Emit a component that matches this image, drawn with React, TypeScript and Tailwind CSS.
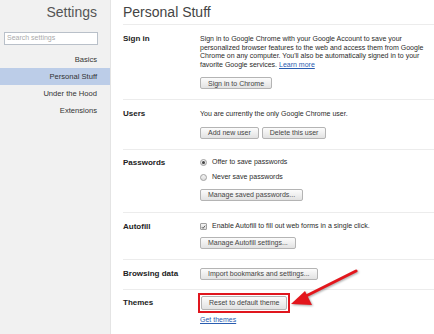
import React from 'react'

const font = { fontFamily: '"Liberation Sans", Arial, sans-serif' }

function Btn({ children, className = '' }: { children: React.ReactNode; className?: string }) {
  return (
    <div
      className={`inline-flex h-[12px] items-center whitespace-nowrap rounded-[2px] border border-[#b4b4b4] bg-linear-to-b from-[#fcfcfc] to-[#e2e2e2] px-[7px] text-[7px] leading-none text-[#444] ${className}`}
    >
      {children}
    </div>
  )
}

function Radio({ checked }: { checked?: boolean }) {
  return (
    <span className="flex h-[7px] w-[7px] items-center justify-center rounded-full border border-[#a0a0a0] bg-linear-to-b from-[#f4f4f4] to-[#dcdcdc]">
      {checked && <span className="h-[3px] w-[3px] rounded-full bg-[#444]" />}
    </span>
  )
}

function Section({ label, labelLead, children, className = '' }: { label: string; labelLead: string; children: React.ReactNode; className?: string }) {
  return (
    <div className={`flex border-t border-[#ececec] ${className}`}>
      <div className={`w-[77px] shrink-0 text-[8px] font-bold text-[#222] ${labelLead}`}>{label}</div>
      <div className="flex flex-col items-start">{children}</div>
    </div>
  )
}

export default function App() {
  const nav = ['Basics', 'Personal Stuff', 'Under the Hood', 'Extensions']

  return (
    <div className="relative flex h-[334px] w-[434px] overflow-hidden bg-white" style={font}>
      {/* sidebar */}
      <div className="w-[111px] shrink-0 border-r border-[#e4e4e4] bg-[#f1f1f1]">
        <div className="h-[24px] pr-[13px] pt-[3px] text-right text-[14px] leading-[18px] text-[#555]">Settings</div>
        <div className="mt-[8px] ml-[4px] mr-[12px] flex h-[13px] items-center border border-[#b9c0c9] bg-white px-[2px] text-[7px] text-[#aaa]">
          Search settings
        </div>
        <div className="mt-[6px]">
          {nav.map((n) => (
            <div
              key={n}
              className={`flex h-[17px] items-center justify-end pr-[13px] text-[7.6px] text-[#333] ${n === 'Personal Stuff' ? 'bg-[#bccde8]' : ''}`}
            >
              {n}
            </div>
          ))}
        </div>
      </div>

      {/* main */}
      <div className="flex-1 pl-[12px] text-[7px] text-[#2a2a2a]">
        <div className="h-[24px] pt-[3px] text-[14px] leading-[18px] text-[#444]">Personal Stuff</div>

        <Section label="Sign in" labelLead="leading-[8.5px]" className="pt-[10px] pb-[10px]">
          <p className="w-[228px] leading-[8.5px]">
            Sign in to Google Chrome with your Google Account to save your personalized browser features to the web and access them from Google
            Chrome on any computer. You'll also be automatically signed in to your favorite Google services.{' '}
            <span className="text-[#2a5db0] underline">Learn more</span>
          </p>
          <Btn className="mt-[8px]">Sign in to Chrome</Btn>
        </Section>

        <Section label="Users" labelLead="leading-[8.5px]" className="pt-[10px] pb-[10px]">
          <div className="leading-[8.5px]">You are currently the only Google Chrome user.</div>
          <div className="mt-[8px] flex gap-[3px]">
            <Btn>Add new user</Btn>
            <Btn>Delete this user</Btn>
          </div>
        </Section>

        <Section label="Passwords" labelLead="leading-[10px]" className="pt-[8px] pb-[11px]">
          <div className="flex h-[10px] items-center gap-[5px]">
            <Radio checked />
            <span>Offer to save passwords</span>
          </div>
          <div className="mt-[5px] flex h-[10px] items-center gap-[5px]">
            <Radio />
            <span>Never save passwords</span>
          </div>
          <Btn className="mt-[6px]">Manage saved passwords...</Btn>
        </Section>

        <Section label="Autofill" labelLead="leading-[10px]" className="pt-[9px] pb-[10px]">
          <div className="flex h-[10px] items-center gap-[5px]">
            <span className="flex h-[7px] w-[7px] items-center justify-center rounded-[1px] border border-[#a0a0a0] bg-linear-to-b from-[#f4f4f4] to-[#dcdcdc]">
              <svg width="6" height="6" viewBox="0 0 6 6">
                <path d="M1 3.2 L2.4 4.6 L5 1.4" fill="none" stroke="#444" strokeWidth="1" />
              </svg>
            </span>
            <span>Enable Autofill to fill out web forms in a single click.</span>
          </div>
          <Btn className="mt-[5px]">Manage Autofill settings...</Btn>
        </Section>

        <Section label="Browsing data" labelLead="leading-[12px]" className="pt-[8px] pb-[9px]">
          <Btn>Import bookmarks and settings...</Btn>
        </Section>

        <Section label="Themes" labelLead="leading-[20px]" className="pt-[3px]">
          <div className="-ml-[2px] border-2 border-[#e0161e] p-[1px]">
            <Btn className="h-[14px]">Reset to default theme</Btn>
          </div>
          <div className="mt-[3px] leading-[8.5px] text-[#2a5db0] underline">Get themes</div>
        </Section>
      </div>

      {/* annotation arrow */}
      <svg className="absolute left-0 top-0" width="434" height="334" style={{ filter: 'drop-shadow(1px 1px 1px rgba(0,0,0,0.35))' }}>
        <line x1="356" y1="271" x2="302" y2="298" stroke="#e3161c" strokeWidth="3" strokeLinecap="round" />
        <polygon points="291,304 305,291 312,305" fill="#e3161c" />
      </svg>
    </div>
  )
}
